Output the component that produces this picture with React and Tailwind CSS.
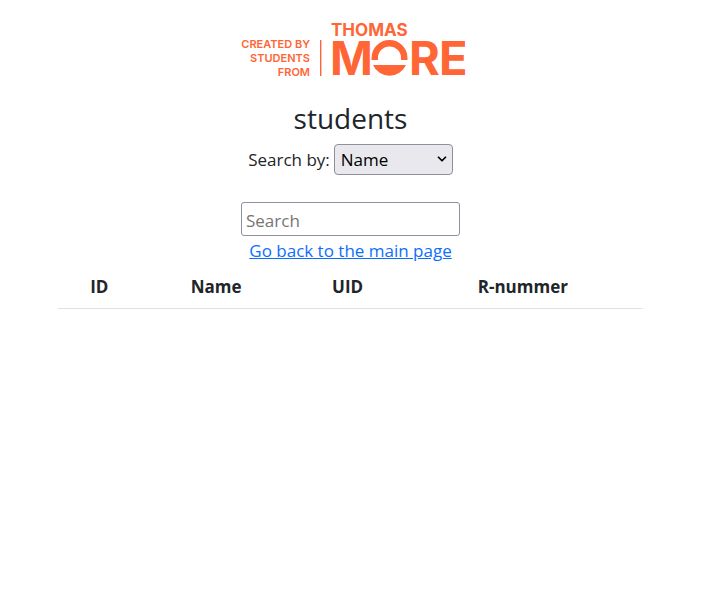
import { ChevronDown } from "lucide-react";

function Logo() {
  return (
    <svg
      className="h-14 w-[228px] overflow-visible fill-[#ff6535] font-[Inter,sans-serif]"
      viewBox="0 0 228 56"
      role="img"
      aria-label="Created by students from Thomas More"
    >
      <g fontSize="11" fontWeight="600" textAnchor="end">
        <text x="73" y="26">CREATED BY</text>
        <text x="73" y="40">STUDENTS</text>
        <text x="73" y="54">FROM</text>
      </g>
      <rect x="83" y="18" width="1.4" height="36" />
      <text x="94" y="14" fontSize="17" fontWeight="700">THOMAS</text>
      <g fontWeight="700">
        <text x="93" y="53" fontSize="46">M</text>
        <text x="172" y="53" fontSize="47">R</text>
        <text x="202" y="53" fontSize="47">E</text>
      </g>
      <path d="M134.500 38 V36 A18 18 0 0 1 170.500 36 V38 H164 V36 A11.500 11.500 0 0 0 141 36 V38 Z" />
      <path d="M136 43 H169 A18 18 0 0 1 136 43 Z" />
    </svg>
  );
}

export default function App() {
  return (
    <main className="flex min-h-screen flex-col items-center bg-white pt-[22px] font-['Open_Sans','Noto_Sans',sans-serif] text-[17px] leading-[27px] text-[#212529]">
      <Logo />
      <h1 className="mt-5 text-[28px] leading-10 font-normal">students</h1>
      <div className="mt-1.5 flex items-center gap-1">
        <label htmlFor="field">Search by:</label>
        <div className="relative">
          <select
            id="field"
            defaultValue="Name"
            className="block h-[31px] w-[119px] appearance-none rounded-[4px] border border-[#8f8f9d] bg-[#e9e9ed] px-1.5 text-black"
          >
            <option>Name</option>
            <option>UID</option>
            <option>R-nummer</option>
          </select>
          <ChevronDown
            className="pointer-events-none absolute top-2 right-1 size-3.5 text-black"
            strokeWidth={3}
            aria-hidden="true"
          />
        </div>
      </div>
      <input
        type="text"
        aria-label="Search"
        placeholder="Search"
        className="mt-[27px] h-[34px] w-[219px] rounded-[3px] border border-[#8f8f9d] px-1 pt-0.5 placeholder:text-[#757575]"
      />
      <a href="#main" className="mt-px text-[#0d6efd] underline">
        Go back to the main page
      </a>
      <table className="mt-px w-5/6 table-fixed border-collapse text-center">
        <thead>
          <tr className="border-b border-[#dee2e6]">
            <th scope="col" className="w-[14%] p-2 font-bold">ID</th>
            <th scope="col" className="w-[26%] p-2 font-bold">Name</th>
            <th scope="col" className="w-[19%] p-2 font-bold">UID</th>
            <th scope="col" className="w-[41%] p-2 font-bold">R-nummer</th>
          </tr>
        </thead>
      </table>
    </main>
  );
}
